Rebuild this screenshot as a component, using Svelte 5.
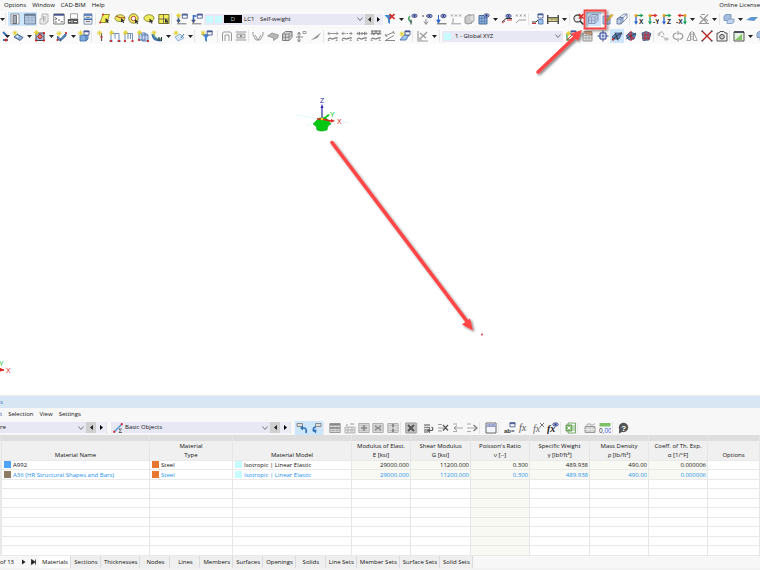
<script>
  const star = (x, y) => `<path d="M${x} ${y - 2.6}V${y + 2.6}M${x - 2.6} ${y}H${x + 2.6}M${x - 1.7} ${y - 1.7}l3.4 3.4M${x + 1.7} ${y - 1.7}l-3.4 3.4" stroke="#e3cf2c" stroke-width=".9"/>`;
  const win = (x, y, c = '#4a5c94') => `<path d="M${x} ${y}h5v4h-5z" fill="#fff" stroke="${c}" stroke-width=".9"/><path d="M${x} ${y}h5v1h-5z" fill="${c}" stroke="${c}" stroke-width=".6"/>`;
  const eye = (x, y) => `<ellipse cx="${x}" cy="${y}" rx="2.7" ry="1.7" fill="#b9c4ea" stroke="#3a4788" stroke-width=".9"/><circle cx="${x}" cy="${y}" r="1.100" fill="#24337e"/>`;
  const cur = (x, y) => `<path d="M${x} ${y}v4.600l1.200-1 1 1.600.9-.5-.8-1.500 1.500-.2z" fill="#333"/>`;
  const dots = (c, ...p) => p.map(([x, y]) => `<circle cx="${x}" cy="${y}" r="1.100" fill="${c}"/>`).join('');
  const cube = (f, s) => `<path d="M1.500 4l3-2.500h6.500v6l-3 3H1.500z" fill="${f}" stroke="${s}" stroke-width=".9"/><path d="M1.500 4h6.500v6.500M8 4l3-2.500M4.500 4v6.500M1.500 7.200h6.500l3-2.500" stroke="${s}" stroke-width=".7" fill="none"/>`;
  const axis = (l, a, b) => `<path d="M3 2.500V9" stroke="${a}" stroke-width="1.300"/><path d="M3 2.500h5" stroke="${b}" stroke-width="1.300"/><path d="M1 8.500h4L3 11.800z" fill="${a}"/><path d="M7.500.5l3 2-3 2z" fill="${b}"/><circle cx="3" cy="2.500" r="1.500" fill="#e6a020"/><text x="6" y="11" font-size="6.500" font-weight="bold" font-family="Liberation Sans, sans-serif" fill="#222">${l}</text>`;
  const member = (x) => `<path d="M1 3.500h10M2.500 1.800L1 3.500l1.500 1.700M9.500 1.800L11 3.500 9.500 5.200" stroke="#888" fill="none" stroke-width=".9"/><path d="M1 9.500q1.500-2 3-1t3 0 4-.5" stroke="#777" fill="none" stroke-width="1.200"/><path d="M1.500 9.500l-1 1.500h2.500zM9.500 9l-1 2h2.500z" fill="#999"/>${x}`;
  const blob = '<path d="M1 4.500C2.500 1 9 .8 10.800 4c.8 3-1.800 4.500-4.800 4.500C3 8.500.5 7 1 4.500z" fill="#ecea5a" stroke="#77762a" stroke-width=".8"/>';
  const grid = (c) => `<path d="M.8 1.500h10.400v9H.800z" fill="#dcdcdc" stroke="${c}"/><path d="M1 3.500h10M1 6h10M1 8.500h10M4 2v8.500M8 2v8.500" stroke="${c}" stroke-width=".5"/>`;

  const art = {
    navigator: '<path d="M2 1h8v10H2z" fill="#fff" stroke="#8a8f98"/><path d="M4 2.500h3.500v8H4z" fill="#a3a9b4" stroke="#555b66" stroke-width=".8"/>',
    tables: '<path d="M.6 1h10.800v10H.6z" fill="#b9cbe2" stroke="#66788f" stroke-width=".9"/><path d="M1 2h10" stroke="#4d6078" stroke-width="1.200"/><path d="M1 4.500h10M1 7.200h10M4.400 3v8M8 3v8" stroke="#91a7c2" stroke-width=".6"/>',
    panel: '<path d="M4 1h6v8H8v2H2V6h2z" fill="#eee" stroke="#a3a3a3" stroke-width=".8"/><path d="M5.500 3v6M7 3v5" stroke="#999" stroke-width=".8"/>',
    console: '<path d="M.8 1h10.400v10H.8z" fill="#fff" stroke="#666" stroke-width=".9"/><path d="M1 1.800h10" stroke="#44508d" stroke-width="1.800"/><path d="M2 4.500l2 1.200-2 1.300M5 7h2M7.500 8.800h2.500M2 9h2" stroke="#444" fill="none" stroke-width=".8"/>',
    script: '<path d="M3.500.8h7v5h-7z" fill="#fff" stroke="#888" stroke-width=".8"/><path d="M.8 6h10.400v4.800H.8z" fill="#555"/><path d="M2 8.500h1.500M5 7.500v2M7 8.500h3" stroke="#fff"/>',
    stack: '<path d="M2 .8h8v10.400H2z" fill="#e9eef8" stroke="#70809c" stroke-width=".8"/><path d="M2 2h8M2 6.200h8" stroke="#3e69b5" stroke-width="1.600"/><path d="M4 4.300h4M4 8.500h4" stroke="#555" stroke-width=".8"/>',
    selPoly: `<path d="M4 1.500h6.500L8 9.500H1.200z" fill="#f4ed55" stroke="#8c8929" stroke-width=".9"/>${dots('#c33', [4, 1.500], [1.200, 9.500])}${cur(6.500, 5)}`,
    selEllipse: `${blob}<path d="M6 4.800L2 3M6 4.800h5" stroke="#a33" stroke-width=".9"/>${cur(7, 5)}`,
    selRing: `<circle cx="5.500" cy="5.500" r="4.700" fill="#f3ec58" stroke="#77762a" stroke-width=".9"/><circle cx="5.500" cy="5.500" r="2.200" fill="#fff" stroke="#a33" stroke-width=".9"/>${cur(7, 6)}`,
    selBlob: `${blob}${cur(6.500, 5.500)}`,
    selRect: `<path d="M.8 1.500h10.200v9H.8z" fill="#f3ec58" stroke="#77762a"/><path d="M1 6h10M5.500 2v8" stroke="#555" stroke-width=".8"/>${cur(7, 5.500)}`,
    loadNew: `<path d="M2.500 3v6" stroke="#2e68c8" stroke-width="1.500"/><path d="M.8 7h3.400L2.500 10zM1 10.800h9.500" fill="#2e68c8" stroke="#555" stroke-width=".8"/>${star(2.600, 2.600)}${win(6.300, 1.200)}`,
    load: `<path d="M2.500 2v6M2.500 3h3" stroke="#2e68c8" stroke-width="1.500"/><path d="M.8 7h3.400L2.500 10zM1 10.800h9.500" fill="#2e68c8" stroke="#555" stroke-width=".8"/>${win(6.300, 1.200)}`,
    filterOff: '<path d="M.5 2h8.500L6 6v5L4 9.500V6z" fill="#4587cf"/><path d="M5.500 1l5 5M10.500 1l-5 5" stroke="#dc2420" stroke-width="1.700"/>',
    filterWin: `<path d="M.5 4h8.500L6 7.500V12l-2-1.500v-3z" fill="#4587cf"/>${win(6.200, 1)}${star(2, 3)}`,
    nodeView: `<path d="M3 3C.5 5.500 2 8 5 9.500" stroke="#45a069" fill="none" stroke-width="1.500"/><path d="M4 6.500v5" stroke="#444"/>${eye(7.500, 2.800)}`,
    gravView: `<path d="M5 6v5M3 8.500l2 3 2-3" stroke="#888" fill="none"/><path d="M1 2l2 2M3 2L1 4M5 2l2 2M7 2L5 4" stroke="#777" stroke-width=".7"/>${eye(8.500, 3)}`,
    loadEye: `<path d="M2.500 2v6M.8 7h3.400L2.500 10z" fill="#2e68c8" stroke="#2e68c8"/><path d="M1 10.800h9.500" stroke="#555"/>${eye(7.500, 3)}`,
    loadX: '<path d="M1 1.500l2 2M3 1.500l-2 2M5 1.500l2 2M7 1.500l-2 2M9 1.500l2 2M11 1.500l-2 2M3 5v5M1 10.800h10" stroke="#888" stroke-width=".8"/>',
    solidGray: '<path d="M1 4l4-2.500 3 1V10l-4 1-3-1z" fill="#c9c9c9" stroke="#969696"/><path d="M6 2.500l4-1V8L7 9" fill="#ddd" stroke="#999" stroke-width=".8"/>',
    gridBlue: `<path d="M1 2.500h8v8.500H1z" fill="#8fb5e2" stroke="#4b6c9c"/><path d="M1 5.300h8M1 8.200h8M3.700 2.500V11M6.400 2.500V11" stroke="#4b6c9c" stroke-width=".6"/>${eye(8.500, 2.500)}`,
    memberEye: `<path d="M1 9L5 5.500h6" stroke="#333" fill="none"/><path d="M1 10l3-2M6 7h5" stroke="#d33"/>${eye(7.500, 3)}`,
    memberX: '<path d="M1 1.500l1.500 2M2.500 1.500L1 3.500M5 1.500l1.500 2M6.500 1.500L5 3.500M9 1.500l1.500 2M10.500 1.500L9 3.500M1 10l3-3h7" stroke="#888" fill="none" stroke-width=".8"/>',
    resultWin: `<path d="M0 9h4l2-2" stroke="#333" fill="none"/><path d="M0 10.500h4" stroke="#c33"/>${win(6, 1)}<path d="M6.500 6.500h4.500v4.500H6.500z" fill="#9fc5ee" stroke="#4673b1" stroke-width=".8"/>`,
    ruler: '<path d="M.8 2v9M11.200 2v9" stroke="#222" stroke-width="1.200"/><path d="M1 4.500h10v4H1z" fill="#e5dd8a" stroke="#444" stroke-width=".8"/><path d="M3 4.500v2M5 4.500v3M7 4.500v2M9 4.500v3" stroke="#333" stroke-width=".7"/>',
    zoomOff: '<circle cx="4.500" cy="5.500" r="3.500" fill="#eee" stroke="#555" stroke-width="1.300"/><path d="M7 8l3.500 3.500" stroke="#333" stroke-width="1.600"/><path d="M6 1l4.500 4.500M10.500 1L6 5.500" stroke="#dc2420" stroke-width="1.600"/>',
    cubeBlue: cube('#c5d2ea', '#7f90b4'),
    cubePen: `<path d="M1 3h7v8H1z" fill="#b8c7e4" stroke="#7288b4"/><path d="M9.500 1L5 6.500l-1 2 2-1L11 2.500z" fill="#f0c33c" stroke="#9b7a35" stroke-width=".6"/>`,
    cubePersp: '<path d="M1 6l2-1.500h4V9l-2 2H1z" fill="#c5d2ea" stroke="#6176a3" stroke-width=".9"/><path d="M1 6h4v5M5 6l2-1.500M3 4.500L8 1h3v4L7 9M7 4.500L11 1" stroke="#6176a3" fill="none" stroke-width=".8"/>',
    axX: axis('X', '#2862c8', '#1aa05a'), axY: axis('-Y', '#1aa05a', '#d3302b'), axZ: axis('Z', '#2862c8', '#1aa05a'),
    axNX: '<path d="M9 2.500V9" stroke="#1aa05a" stroke-width="1.300"/><path d="M9 2.500H4" stroke="#d3302b" stroke-width="1.300"/><path d="M7 8.500h4l-2 3.300z" fill="#1aa05a"/><path d="M4.500.5l-3 2 3 2z" fill="#d3302b"/><circle cx="9" cy="2.500" r="1.500" fill="#e6a020"/><text x="0" y="11" font-size="6.500" font-weight="bold" font-family="Liberation Sans, sans-serif" fill="#222">-X</text>',
    axGray: '<path d="M1 10.500h10M2 10L10 1.500M2 3l7 7M3 1.500h4M6 5l4 3" stroke="#999" stroke-width="1.200"/>',
    layers: '<path d="M1 3l2-1.500h5V6L6 7.500H1z" fill="#a3bddf" stroke="#6f8db6" stroke-width=".8"/><path d="M4 7.500L6 6h5v3l-2 1.500H4z" fill="#c3d5ec" stroke="#7695bb" stroke-width=".8"/>',
    plane: '<path d="M0 7l5-3h7L8 8z" fill="#5e95cf"/>',
    sliver: '<path d="M7 2l5 5M7 10h5" stroke="#3d72b8" stroke-width="2"/><circle cx="10" cy="10" r="1.500" fill="#c33"/>',
    newMember: `<path d="M2 7l3-3 6 3.500-3 3z" fill="#8fb1d9" stroke="#44658f"/>${star(3, 3)}<circle cx="5.500" cy="6.500" r="1" fill="#fff"/>`,
    newSurface: `<path d="M2 3h8v7.500H2z" fill="#a6bbdf" stroke="#444"/><circle cx="6" cy="6.500" r="2" fill="#e77" stroke="#a22"/>${dots('#c22', [2, 10.500], [10, 10.500], [10, 3])}${star(2.500, 2.500)}`,
    newSolid: `<path d="M1.500 6l3 3V11l-3-2zM4.500 9L10 3v3l-5.500 5z" fill="#5e8fc8" stroke="#355d91" stroke-width=".8"/>${star(3, 3.500)}${dots('#c22', [1.500, 10], [10, 3])}`,
    newBlock: `<path d="M2 5h6v6H2zM8 5l2-2v6L8 11" fill="#7fa9dc" stroke="#3c69a3" stroke-width=".8"/>${star(2.500, 3)}${win(6, 1)}`,
    nodeLoad: `<path d="M6.500 3v8" stroke="#555" stroke-width="1.200"/>${star(4.500, 3)}<path d="M5 6.500h3L6.500 9z" fill="#c33"/>`,
    frame1: `<path d="M2 11V3.500h8V11M0 11h4M8 11h4M6 3.500v5" stroke="#7593bd" fill="none"/>${star(2.500, 2.700)}${dots('#c22', [2, 11], [10, 11])}`,
    frame2: `<path d="M2 11V3.500h7.500V11M5 4v5M7.500 4v5" stroke="#7593bd" fill="none"/>${star(2.500, 2.700)}${dots('#c22', [2, 11], [9.500, 11])}`,
    frame3: `<path d="M2 3h6v7H2zM5 5h6v6H5zM2 3l3 2M8 3l3 2" stroke="#5277ad" fill="#cbdaf0" stroke-width=".9"/>${star(2.500, 2.700)}${dots('#c22', [2, 10], [11, 11])}`,
    pipe: `<path d="M2 4c0 4 3 6 8 6" stroke="#3c72ae" stroke-width="3" fill="none"/><path d="M3 4c0 3 3 5 7 5" stroke="#83c47e" stroke-width="1.200" fill="none"/>${star(3, 2.700)}<path d="M8 7v4M10.500 7v4" stroke="#333"/>`,
    surfLoad: `<path d="M2 7l5-3 4 4-6 3z" fill="#d6e6f7" stroke="#7aa5d6" stroke-width=".8"/>${star(3, 3)}<path d="M8 8l3-4" stroke="#3c72ae"/>`,
    portal: '<path d="M1.500 11V4q0-2 1.500-2h6q1.500 0 1.500 2v7M4 11V5h4v6" stroke="#999" fill="none"/>',
    brick: '<path d="M.5 2h11M.5 10h11M2 4v4h8V4z" stroke="#9a9a9a" fill="#e2e2e2"/><path d="M5 4.500l3 1.500-3 1.500z" fill="#888"/>',
    vshape: '<path d="M1 2v3l3 5h4l3-5V2M3 5l3 5 3-5" stroke="#909090" fill="none" stroke-width=".9"/>',
    plate: '<path d="M.5 6l4.500-3 6.500 2-1 3-4 2.500V8z" fill="#b6b6b6" stroke="#888" stroke-width=".7"/>',
    cubeGray: cube('#d6d6d6', '#707070'),
    cross: '<path d="M4 3v8M1 7h7M2.500 4.500L4 2l1.500 2.500M2.500 9.500L4 12l1.500-2.500" stroke="#777" fill="none" stroke-width=".9"/><path d="M8 1.500h3v2H8z" fill="none" stroke="#888" stroke-width=".8"/>',
    slope: '<path d="M.5 10.500L5 7l6-4.500L7.500 8z" fill="#999"/>',
    m1: member(''), m2: member('<path d="M4.500 3.500h1M7 3.500h1" stroke="#fafafa" stroke-width="1.500"/>'), m3: member('<path d="M3.500 2v3M6 2v3M8.500 2v3" stroke="#777" stroke-width=".9"/>'), m4: member('<path d="M1 1h10" stroke="#666"/><path d="M2 1l2 4 2-4 2 4 2-4" stroke="#666" fill="none" stroke-width=".8"/>'),
    slopeLoad: '<path d="M1 6l9-4M1 10.500h10M2 10l8-4.500" stroke="#888"/><path d="M1 4l2 3M9 1l1.500 3" stroke="#888"/>',
    newWin: `<path d="M1 10l4-5h5L7 10z" fill="#9fc5ee" stroke="#3c69a3" stroke-width=".8"/>${star(3, 4)}${win(6, 1)}`,
    protractor: '<path d="M1 1v10h10M1 11L10 2M3 3l6 5" stroke="#999" fill="none" stroke-width="1.200"/><path d="M1 6l5 5H1z" fill="#bbb"/>',
    csNew: `<path d="M2 3v7h7" stroke="#3aa04e" fill="none" stroke-width="1.300"/><path d="M2 10l5-5" stroke="#c33"/>${star(3.500, 3.500)}${win(6, 1)}`,
    csHand: '<path d="M1 3h9v8H1z" fill="#e2e2e2" stroke="#999"/><path d="M1 5.500h9M1 8h9M4 3v8M7 3v8" stroke="#999" stroke-width=".7"/><path d="M2 1.500h8V5L7 4H4z" fill="#c99b7b" stroke="#8a6450" stroke-width=".6"/>',
    snap: '<path d="M6 .5v11M.5 6h11" stroke="#2d3f8f"/><path d="M3 3h6v6H3z" fill="#dfe6fa" stroke="#2d3f8f"/><path d="M6 4.500v3M4.500 6h3" stroke="#2d3f8f" stroke-width=".7"/>',
    cutA: '<path d="M1 7l4-4h6l-3 6H3z" fill="#5c86bb" stroke="#34507d" stroke-width=".8"/><path d="M1 9.500l10-7M4 2.500l3 8" stroke="#333" stroke-width=".9"/><circle cx="2" cy="9.500" r="1.200" fill="#c33"/>',
    cutB: '<path d="M1 6l4-4 6 2-2 5-5 1z" fill="#5c86bb" stroke="#34507d" stroke-width=".8"/><path d="M6 1v10M3 4l6 5" stroke="#c22" stroke-width="1.100"/><path d="M1 9l10-6" stroke="#333" stroke-width=".8"/>',
    cutC: '<path d="M2 3l4-1.500 5 2-2 6.500-6 .5z" fill="#6684b4" stroke="#34507d" stroke-width=".8"/><path d="M2.500 5h8M2 8h8M5 2v8M8 2v8" stroke="#c22" stroke-width=".9"/>',
    rotPts: '<path d="M2 3q4-3 5 2M4 6.500q5 0 4 4" stroke="#aaa" fill="none"/><circle cx="2" cy="4.500" r="1.100" fill="none" stroke="#999" stroke-width=".8"/><circle cx="10" cy="9" r="1.100" fill="none" stroke="#999" stroke-width=".8"/>',
    rotate: '<path d="M4.500 3C0 4 0 8.500 5 9.500M7.500 9.500C12 8.500 12 4 7 3M6 1v4M6 8v3.500" stroke="#999" fill="none" stroke-width="1.200"/>',
    mirror: '<path d="M6 1v10" stroke="#999" stroke-dasharray="1.500 1"/><path d="M4.500 2v8.500H.8zM7.500 2v8.500h3.700z" fill="none" stroke="#999" stroke-width=".9"/>',
    delX: '<path d="M1 1l10 10M11 1L1 11" stroke="#b3201e" stroke-width="1.300"/><path d="M.5.500h1.500v1.500H.500zM10 .5h1.500V2H10zM.5 10H2v1.500H.500zM10 10h1.500v1.500H10z" fill="#444"/>',
    camera: '<path d="M1 3h2l1-1.500h4L9 3h2v8H1z" fill="#eee" stroke="#555"/><circle cx="6" cy="6.800" r="2.300" fill="#ccc" stroke="#444"/>',
    viewSel: '<path d="M1 2h10v9H1z" fill="#e5f3e0" stroke="#555"/><path d="M1 2h10" stroke="#334" stroke-width="1.500"/><path d="M2 10L9 4v6z" fill="#84c46a"/>',
    undoSel: '<path d="M1 1.500h5.500v3H1z" fill="#ddd" stroke="#777" stroke-width=".8"/><path d="M5 6h3q3 0 2 5" stroke="#2f6fb5" fill="none" stroke-width="1.600"/><path d="M4 6l3-2.500v5z" fill="#2f6fb5"/>',
    redoSel: '<path d="M5.500 1.500H11v3H5.500z" fill="#ddd" stroke="#777" stroke-width=".8"/><path d="M6 5Q2 5.500 4 9.500" stroke="#2f6fb5" fill="none" stroke-width="1.600"/><path d="M2 8l4.500-.5-.5 4z" fill="#2f6fb5"/>',
    tRow: `${grid('#9a9a9a')}<path d="M1 2.500h10M1 6h10" stroke="#888" stroke-width="1.600"/>`,
    tTop: '<path d="M1 5h10v6H1zM1 8h10M4 5v6M8 5v6" fill="#e5e5e5" stroke="#aaa" stroke-width=".8"/><path d="M2 3h2M6 2h4" stroke="#999"/>',
    tPlus: `${grid('#b0b0b0')}<path d="M6 3v6M3 6h6" stroke="#888" stroke-width="1.600"/>`,
    tCross: `${grid('#b0b0b0')}<path d="M3 4l6 4M9 4L3 8" stroke="#888" stroke-width="1.400"/>`,
    tSplit: `${grid('#b0b0b0')}<path d="M6 2v8" stroke="#777" stroke-width="1.600"/><path d="M3 6h6" stroke="#eee"/>`,
    tDel: '<path d="M.8 1h10.400v10H.8z" fill="#c4c4c4" stroke="#999"/><path d="M3 3l6 6M9 3L3 9" stroke="#555" stroke-width="2"/>',
    rIns: '<path d="M1 3h6M1 5.500h6M1 8h4M1 10h4" stroke="#888" stroke-width="1.300"/><path d="M5 8.500h4q2-2-.5-3.500M7 6.500l-2 2 2 2" stroke="#555" fill="none" stroke-width="1.200"/>',
    rDel: '<path d="M1 2.500h4M1 6h6M1 9h4" stroke="#999" stroke-width="1.200"/><path d="M6 3l5 5.500M11 3L6 8.500" stroke="#555" stroke-width="1.300"/>',
    rLeft: '<path d="M1 2h4M1 9.500h4M3 6h8" stroke="#aaa" stroke-width="1.200"/><path d="M5 3.500L2 6l3 2.500" stroke="#888" fill="none"/>',
    rRight: '<path d="M1 2h4M1 9.500h4M1 6h9" stroke="#aaa" stroke-width="1.200"/><path d="M7.500 3l3.500 3-3.500 3" stroke="#777" fill="none" stroke-width="1.200"/>',
    tWin: '<path d="M1 1h10v10H1z" fill="#f4f5fb" stroke="#666"/><path d="M1.500 1.500h9v3h-9z" fill="#aab0d8"/><path d="M1 4.500h10M4.500 2v3M8 2v3" stroke="#7b82b3" stroke-width=".6"/>',
    abc: `${win(6, .8)}<text x="0" y="11" font-size="6" font-weight="bold" font-family="Liberation Sans, sans-serif" fill="#333">ab=</text>`,
    fx: '<text x="1" y="9" font-size="10" font-style="italic" font-family="Liberation Serif, serif" fill="#555">fx</text>',
    fxX: '<text x="0" y="10" font-size="10" font-style="italic" font-family="Liberation Serif, serif" fill="#666">fx</text><path d="M7 1l4 4M11 1L7 5" stroke="#777"/>',
    fxEye: `<text x="0" y="10" font-size="10" font-style="italic" font-weight="bold" font-family="Liberation Serif, serif" fill="#222">fx</text>${eye(8.500, 2.500)}`,
    excel: '<path d="M3 1h7.500v10H3z" fill="#f3faf0" stroke="#6d9d63" stroke-width=".9"/><path d="M1 3h6v6H1z" fill="#8cc078" stroke="#578b49" stroke-width=".8"/><path d="M2.500 4.500l3 3M5.500 4.500l-3 3" stroke="#fff"/><path d="M8 4h2M8 6h2M8 8h2" stroke="#6d9d63" stroke-width=".8"/>',
    print: '<path d="M1 4.500h10v6H1z" fill="#ccc" stroke="#999"/><path d="M3 4V2h4v2M8 3.500l3-2" fill="#eee" stroke="#aaa"/><path d="M4 5v5M8 5v5M1 7.500h10" stroke="#eee" stroke-width=".8"/>',
    decimals: '<path d="M.5 1h11v3.500H.5z" fill="#7dc068"/><text x="0" y="11" font-size="6.500" font-family="Liberation Sans, sans-serif" fill="#333">0,<tspan fill="#3b62dc">00</tspan></text>',
    help: '<circle cx="6.500" cy="5.500" r="4.700" fill="#555"/><path d="M2 7v4.500l4-2z" fill="#555"/><text x="4.300" y="8.500" font-size="8" font-weight="bold" font-family="Liberation Sans, sans-serif" fill="#fff">?</text>',
  };

  const S = { sep: true };
  const g = (w, list, on = []) => ({ w, items: list.split(' '), on });
  const fileBar = [
    g(5, 'v'), S, g(87, 'navigator tables panel console script stack', ['navigator', 'tables']), S,
    g(73, 'selPoly selEllipse selRing selBlob selRect'), S, g(30, 'loadNew load'),
    { combo: 'load' }, g(23, 'filterOff v'),
    g(122, 'nodeView gravView loadEye loadX solidGray gridBlue v memberEye memberX'), S,
    g(38, 'resultWin ruler v'), S, g(57, 'zoomOff cubeBlue cubePen cubePersp', ['cubeBlue']), S,
    g(87, 'axX axY axZ axNX v axGray v'), S, g(45, 'layers v plane v'),
  ];
  const editBar = [
    g(3, 'sliver'), g(88, 'v newMember v newSurface v newSolid v newBlock'), S,
    g(100, 'nodeLoad frame1 frame2 frame3 pipe v surfLoad v'), S, g(20, 'filterWin'), S,
    g(28, 'portal brick'), S, g(72, 'vshape plate cubeGray cross slope'), S,
    g(86, 'm1 m2 m3 m4 slopeLoad newWin'), S, g(24, 'protractor v'), S,
    { combo: 'axes' }, g(15, 'csNew'), S, g(72, 'csHand snap cutA cutB cutC', ['cutA']), S,
    g(73, 'rotPts rotate mirror delX camera'), S, g(37, 'viewSel v layers'),
  ];
  const tableBar = [
    { combo: 'category' }, S, { combo: 'objects' }, S, g(28, 'undoSel redoSel', ['undoSel', 'redoSel']), S,
    g(72, 'tRow tTop tPlus tCross tSplit'), S, g(12, 'tDel'), S, g(57, 'rIns rDel rLeft rRight'), S,
    g(14, 'tWin'), S, g(57, 'abc fx fxX fxEye'), S, g(12, 'excel'), S, g(30, 'print decimals'), S, g(12, 'help'),
  ];

  const columns = [
    ['', 'Material Name', 148], ['Material', 'Type', 83], ['', 'Material Model', 119],
    ['Modulus of Elast.', 'E [ksi]', 59], ['Shear Modulus', 'G [ksi]', 60], ["Poisson's Ratio", 'ν [--]', 59],
    ['Specific Weight', 'γ [lbf/ft³]', 60], ['Mass Density', 'ρ [lb/ft³]', 59], ['Coeff. of Th. Exp.', 'α [1/°F]', 59],
    ['', 'Options', 50],
  ];
  const rows = [
    ['#4fa3fb', 'A992'],
    ['#8d7a62', 'A36 (HR Structural Shapes and Bars)'],
  ];
  const values = ['29000.000', '11200.000', '0.300', '489.938', '490.00', '0.000006'];
  const tabs = ['Materials', 'Sections', 'Thicknesses', 'Nodes', 'Lines', 'Members', 'Surfaces', 'Openings', 'Solids', 'Line Sets', 'Member Sets', 'Surface Sets', 'Solid Sets'];
  let active = $state('Materials');
</script>

{#snippet chevron()}
  <svg class="chev" width="6" height="6" viewBox="0 0 6 6" aria-hidden="true"><path d="M.5 1.500L3 4.500l2.500-3" fill="none" stroke="#555" stroke-width=".8" /></svg>
{/snippet}

{#snippet steps()}
  <button class="step prev" aria-label="Previous"><svg width="3" height="5" viewBox="0 0 3 5"><path d="M3 0v5L0 2.500z" fill="#222" /></svg></button>
  <button class="step" aria-label="Next"><svg width="3" height="5" viewBox="0 0 3 5"><path d="M0 0v5l3-2.500z" fill="#000" /></svg></button>
{/snippet}

{#snippet bar(entries)}
  {#each entries as e}
    {#if e.sep}
      <span class="sep"></span>
    {:else if e.combo === 'load'}
      <div class="combo loadcase">
        <i class="sw"></i><i class="sw"></i><b class="tag">D</b><span class="code">LC1</span>
        <select aria-label="Load case"><option>Self-weight</option></select>{@render chevron()}
      </div>
      {@render steps()}
    {:else if e.combo === 'axes'}
      <div class="combo axes"><i class="sw"></i><select aria-label="Coordinate system"><option>1 - Global XYZ</option></select>{@render chevron()}</div>
    {:else if e.combo === 'category'}
      <div class="combo category"><select aria-label="Category"><option>re</option></select>{@render chevron()}</div>
      {@render steps()}
    {:else if e.combo === 'objects'}
      <div class="combo objects">
        <svg width="10" height="10" viewBox="0 0 10 10" aria-hidden="true"><path d="M1 9L9 1" stroke="#5a95d4" stroke-width="1.400" /><circle cx="1.200" cy="8.800" r="1.100" fill="#d22" /><circle cx="8.800" cy="1.200" r="1.100" fill="#d22" /><path d="M6 6h3M6 9.500h3M6 6l1.500 1.700L6 9.500" stroke="#333" stroke-width=".7" fill="none" /></svg>
        <select aria-label="Object group"><option>Basic Objects</option></select>{@render chevron()}
      </div>
      {@render steps()}
    {:else}
      <div class="group" style:width="{e.w}px">
        {#each e.items as name}
          {#if name === 'v'}
            <button class="caret" aria-label="More"><svg width="5" height="3" viewBox="0 0 5 3"><path d="M0 0h5L2.500 3z" fill="#222" /></svg></button>
          {:else}
            <button class="tool" class:on={e.on.includes(name)} aria-label={name}>
              <svg width="12" height="12" viewBox="0 0 12 12">{@html art[name]}</svg>
            </button>
          {/if}
        {/each}
      </div>
    {/if}
  {/each}
{/snippet}

<div class="app">
  <header>
    <nav class="menu main">
      <button>Options</button><button>Window</button><button>CAD-BIM</button><button>Help</button>
      <span class="license">Online License</span>
    </nav>
    <div class="bar">{@render bar(fileBar)}</div>
    <div class="bar">{@render bar(editBar)}</div>
  </header>

  <main>
    <svg class="scene" width="760" height="350" viewBox="0 44 760 350" role="img" aria-label="Model view">
      <path d="M295 115l28 4 27 4M307 126l30-14" stroke="#d9f8f8" stroke-width=".8" fill="none" />
      <path d="M316 121l3-3h7l3 3 2 3-3 2-1 4-4 1h-3l-3-1-1-4-3-2z" fill="#06c713" stroke="#0ba51a" stroke-width=".6" />
      <path d="M322 119V107" stroke="#2626a4" stroke-width="1.200" /><path d="M320.500 108l1.500-4 1.500 4z" fill="#2626a4" />
      <path d="M322 119l6-3" stroke="#19c52a" stroke-width="1.400" /><path d="M326 115l4-1-2 3z" fill="#19c52a" />
      <path d="M317 119l5 0 9 2" stroke="#e12020" stroke-width="1.500" fill="none" /><path d="M331 119l4 2-4 1.500z" fill="#e12020" />
      <circle cx="322" cy="119" r="1.300" fill="#f4d21c" />
      <g font-family="Liberation Sans, sans-serif" font-size="7">
        <text x="320" y="103" fill="#2626a4">Z</text><text x="330" y="117" fill="#19c52a">Y</text><text x="337" y="124" fill="#e12020">X</text>
        <text x="-1" y="366" fill="#19c52a">Y</text><text x="6" y="373" fill="#e12020">X</text>
      </g>
      <path d="M0 368.500l4 1.500-4 1z" fill="#e12020" stroke="#e12020" />
      <circle cx="482" cy="334.500" r="1" fill="#e33" />
    </svg>
  </main>

  <section>
    <h2>s</h2>
    <nav class="menu sub"><button>t</button><button>Selection</button><button>View</button><button>Settings</button></nav>
    <div class="bar tbar">{@render bar(tableBar)}</div>
    <table>
      <colgroup><col style:width="2px" />{#each columns as c, i}<col style:width={i < 9 ? `${c[2]}px` : 'auto'} />{/each}</colgroup>
      <thead>
        <tr class="band"><td></td>{#each columns as c}<td></td>{/each}</tr>
        <tr class="head"><td></td>{#each columns as c}<th scope="col">{c[0]}<br />{c[1]}</th>{/each}</tr>
      </thead>
      <tbody>
        {#each rows as r, i}
          <tr class:linked={i === 1}>
            <td class="edge"></td>
            <td><i style:background={r[0]}></i>{r[1]}</td>
            <td><i class="steel"></i>Steel</td>
            <td><i class="iso"></i>Isotropic | Linear Elastic</td>
            {#each values as v}<td class="num">{v}</td>{/each}
            <td></td>
          </tr>
        {/each}
        {#each Array(8) as _}
          <tr><td class="edge"></td>{#each columns as c, j}<td class:num={j === 5}></td>{/each}</tr>
        {/each}
      </tbody>
    </table>
    <footer>
      <span class="pos">of 13</span>
      <button class="page" aria-label="Next table"><svg width="4" height="6" viewBox="0 0 4 6"><path d="M0 .5v5L3.500 3z" fill="#222" /></svg></button>
      <button class="page" aria-label="Last table"><svg width="6" height="6" viewBox="0 0 6 6"><path d="M.5.500v5L4 3zM4.500.500v5" fill="#222" stroke="#222" stroke-width=".8" /></svg></button>
      <div class="tabs" role="tablist">
        {#each tabs as t}<button role="tab" aria-selected={active === t} class:active={active === t} onclick={() => (active = t)}>{t}</button>{/each}
      </div>
    </footer>
    <div class="below"></div>
  </section>

  <svg class="marks" width="760" height="570" viewBox="0 0 760 570" aria-hidden="true">
    <defs><filter id="sh" x="-20%" y="-20%" width="150%" height="150%"><feDropShadow dx="1.500" dy="1.500" stdDeviation="1.200" flood-color="#000" flood-opacity=".5" /></filter></defs>
    <g filter="url(#sh)">
      <path d="M584.500 10.500h21v18h-21z" fill="none" stroke="#f04848" stroke-width="1.800" />
      <path d="M538 72L576 36" stroke="#f44" stroke-width="3.500" stroke-linecap="round" />
      <path d="M582 30l-4 11-7-7.500z" fill="#f44" />
      <path d="M332 142.500L469 324" stroke="#f44" stroke-width="3.500" stroke-linecap="round" />
      <path d="M473 330.500l-11-6 8-6z" fill="#f44" />
    </g>
  </svg>
</div>

<style>
  :global(body) { margin: 0; }
  .app { position: relative; display: flex; flex-direction: column; min-height: 100vh; overflow: hidden; background: #fff; font: 6px/9px 'Open Sans', 'Noto Sans', sans-serif; color: #111; }
  button, select { font: inherit; color: inherit; border: 0; background: none; padding: 0; margin: 0; }
  header, section { background: #f7f7f7; }
  .menu { display: flex; align-items: center; }
  .main { height: 11px; padding-left: 4px; gap: 6px; }
  .license { margin-left: auto; white-space: nowrap; }
  .bar { display: flex; align-items: center; height: 16px; overflow: hidden; background: #fafafa; }
  .bar + .bar { margin-top: 1px; }
  .bar > * { flex-shrink: 0; }
  .sep { box-sizing: border-box; width: 3px; height: 12px; border-left: 1px solid #e6e6e6; }
  .group { display: flex; height: 14px; }
  .tool { flex: 14 1 0; min-width: 0; display: flex; align-items: center; justify-content: center; }
  .tool svg { flex-shrink: 0; }
  .caret { flex: 8 1 0; min-width: 0; display: flex; align-items: center; justify-content: center; }
  .on { background: #cde6fb; }
  .combo { box-sizing: border-box; display: flex; align-items: center; height: 11px; padding: 0 2px; background: #e8e8f4; }
  .combo select { flex: 1; min-width: 0; appearance: none; outline: 0; }
  .loadcase { width: 161px; gap: 2px; }
  .axes { width: 121px; gap: 4px; }
  .category { width: 86px; padding-left: 0; }
  .objects { width: 159px; gap: 2px; }
  .sw { width: 7px; height: 7px; background: #c8fbfd; }
  .tag { width: 18px; height: 8px; line-height: 8px; background: #000; color: #ccc; font-weight: 400; text-align: center; }
  .code { width: 14px; }
  .step { width: 9px; height: 11px; display: flex; align-items: center; justify-content: center; background: #ececf6; }
  .step.prev { background: #cfcfcf; }
  main { flex: 1; position: relative; min-height: 100px; overflow: hidden; }
  .scene, .marks { position: absolute; left: 0; top: 0; pointer-events: none; }
  section { border-top: 1px solid #ececec; }
  h2 { margin: 0; height: 12px; font-size: 6px; line-height: 12px; font-weight: 400; color: #2673bd; background: #d8e5f2; }
  .sub { height: 12px; gap: 6px; }
  .sub button:first-child { color: #26a; }
  .tbar { height: 15px; background: #f7f7f7; }
  .tbar .sep { width: 5px; }
  .tbar .step { width: 10px; }
  table { width: 100%; table-layout: fixed; border-collapse: separate; border-spacing: 0; background: #fff; }
  th, td { box-sizing: border-box; padding: 0; line-height: 8px; border-right: 1px solid #e6e6e6; border-bottom: 1px solid #e9e9e9; white-space: nowrap; overflow: hidden; }
  td:nth-child(n + 2) { padding-left: 2px; }
  tbody td { height: 9px; }
  tbody tr:nth-child(even) td { height: 10px; }
  .band td { height: 6px; background: #dedede; border-bottom: 0; line-height: 1px; }
  .head th, .head td { height: 20px; background: #f0f0f0; font-weight: 400; line-height: 9px; vertical-align: bottom; }
  td.edge { background: #eaeaea; }
  td.num { text-align: right; padding-right: 1px; background: #f9f9f3; }
  td i { display: inline-block; width: 7px; height: 7px; margin-right: 2px; vertical-align: top; }
  .steel { background: #e87730; }
  .iso { background: #c8fbfd; }
  .linked { color: #1b90ee; }
  footer { display: flex; align-items: center; height: 12px; }
  .pos { width: 19px; }
  .page { display: flex; width: 10px; justify-content: center; }
  .tabs { display: flex; height: 12px; }
  .tabs button { box-sizing: border-box; min-width: 30px; padding: 0 2px 0 3px; background: #efefef; border-right: 1px solid #dadae0; white-space: nowrap; }
  .tabs .active { background: #fff; }
  .below { height: 2px; background: #f2f2f2; }
</style>
